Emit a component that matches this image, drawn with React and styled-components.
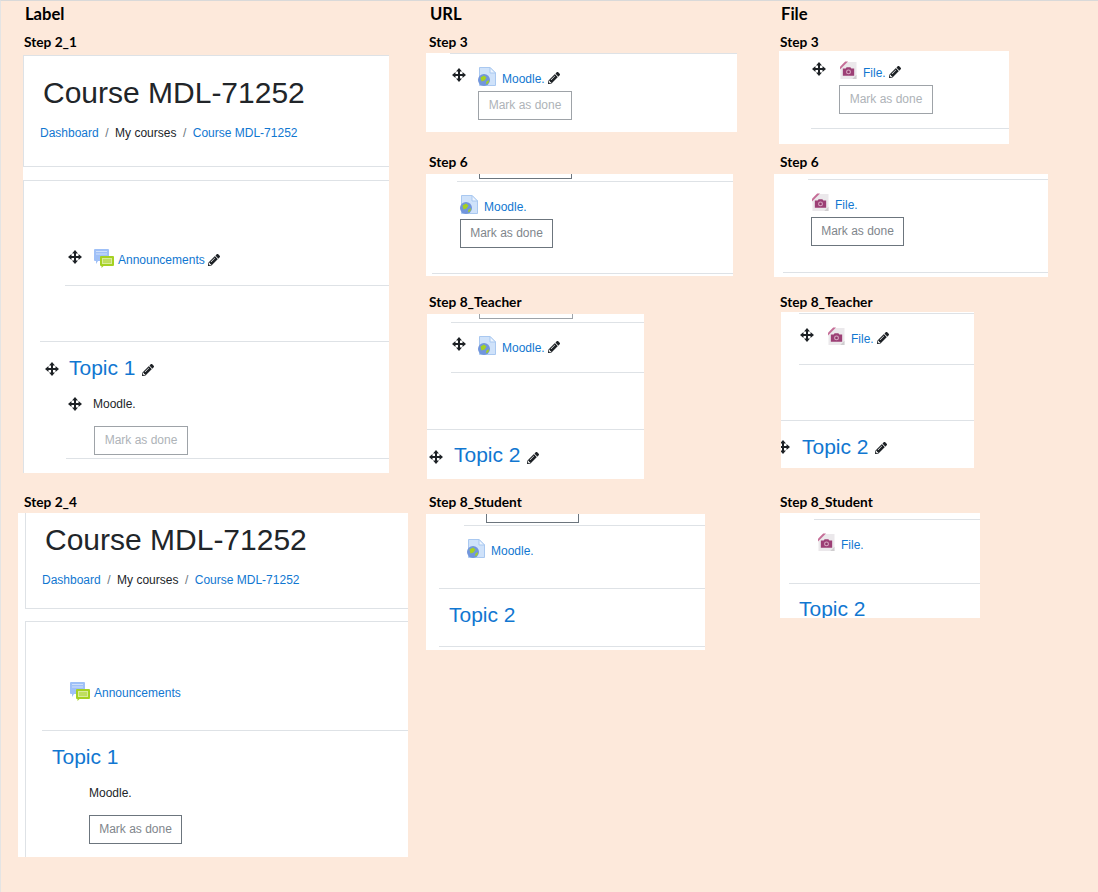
import React from "react";
import styled, { createGlobalStyle } from "styled-components";
import { FaPencilAlt } from "react-icons/fa";

const GlobalStyle = createGlobalStyle`
  html, body {
    margin: 0;
    padding: 0;
    background: #fde9db;
  }
`;

const Page = styled.div`
  box-sizing: border-box;
  width: 1098px;
  height: 892px;
  overflow: hidden;
  display: grid;
  grid-template-columns: 408px 348px 1fr;
  padding-left: 17px;
  background: #fde9db;
  border-top: 1px solid #d9d9d9;
  border-left: 1px solid #e4e4e4;
  font-family: "Liberation Sans", Arial, sans-serif;
`;

const Column = styled.div`
  display: flex;
  flex-direction: column;
`;

const Heading = styled.h2`
  margin: 0 0 7px ${(p) => p.$left}px;
  height: 26px;
  font: 700 16.6px/27px Lato, "Liberation Sans", sans-serif;
  color: #000;
`;

const Section = styled.section`
  height: ${(p) => p.$h}px;
  flex-shrink: 0;
`;

const StepLabel = styled.div`
  margin-left: ${(p) => p.$left}px;
  height: 16px;
  font: 700 13.7px/16px Lato, "Liberation Sans", sans-serif;
  color: #000;
`;

const Panel = styled.div`
  display: flex;
  flex-direction: column;
  margin: ${(p) => p.$top}px 0 0 ${(p) => p.$left}px;
  width: ${(p) => p.$w}px;
  height: ${(p) => p.$h}px;
  background: #fff;
  overflow: hidden;
`;

const Card = styled.div`
  box-sizing: border-box;
  display: flex;
  flex-direction: column;
  flex-shrink: 0;
  margin: ${(p) => p.$top || 0}px 0 0 ${(p) => p.$left || 0}px;
  height: ${(p) => p.$h}px;
  border-left: 1px solid #dee2e6;
  border-top: ${(p) => (p.$noTop ? "0" : "1px solid #dee2e6")};
  border-bottom: ${(p) => (p.$bottom ? "1px solid #dee2e6" : "0")};
`;

const Title = styled.h1`
  margin: ${(p) => p.$top}px 0 0 ${(p) => p.$left}px;
  font-size: 30px;
  font-weight: 400;
  line-height: 36px;
  color: #212529;
`;

const Breadcrumb = styled.nav`
  display: flex;
  gap: 6.5px;
  margin: ${(p) => p.$top}px 0 0 ${(p) => p.$left}px;
  font-size: 12px;
  line-height: 18px;
  color: #212529;
`;

const Crumb = styled.a`
  color: #1177d1;
`;

const Slash = styled.span`
  color: #6c757d;
`;

const Rule = styled.div`
  flex-shrink: 0;
  height: 1px;
  margin: ${(p) => p.$top}px 0 0 ${(p) => p.$left}px;
  background: #dee2e6;
`;

const Row = styled.div`
  display: flex;
  flex-shrink: 0;
  align-items: center;
  height: ${(p) => p.$h || 19}px;
  margin: ${(p) => p.$top}px 0 0 ${(p) => p.$left}px;
`;

const MoveSvg = styled.svg`
  flex-shrink: 0;
  width: 14px;
  height: 14px;
  margin-right: ${(p) => p.$gap ?? 12}px;
  margin-bottom: ${(p) => p.$lift || 0}px;
`;

const ItemLink = styled.a`
  margin-left: ${(p) => p.$gap ?? 6}px;
  padding-top: ${(p) => p.$drop ?? 5}px;
  font-size: 12px;
  color: #1177d1;
  white-space: nowrap;
`;

const PlainText = styled.span`
  font-size: 12px;
  color: #212529;
`;

const TopicLink = styled.a`
  font-size: 21px;
  line-height: 28px;
  color: #1177d1;
  white-space: nowrap;
`;

const Pencil = styled(FaPencilAlt)`
  flex-shrink: 0;
  width: 12px;
  height: 12px;
  margin-left: ${(p) => p.$gap ?? 3}px;
  margin-top: ${(p) => p.$drop ?? 3}px;
  color: #1d2125;
`;

const DoneButton = styled.button`
  box-sizing: border-box;
  flex-shrink: 0;
  align-self: flex-start;
  width: ${(p) => (p.$muted ? 94 : 93)}px;
  height: 29px;
  margin: ${(p) => p.$top}px 0 0 ${(p) => p.$left}px;
  padding: 0 0 2px;
  background: #fff;
  border: 1px solid ${(p) => (p.$muted ? "#9ea3a8" : "#6c757d")};
  font: 12px "Liberation Sans", Arial, sans-serif;
  color: ${(p) => (p.$muted ? "#aeb3b8" : "#7f868c")};
`;

const ClippedButton = styled.div`
  box-sizing: border-box;
  flex-shrink: 0;
  width: ${(p) => (p.$muted ? 94 : 93)}px;
  height: ${(p) => p.$h}px;
  margin-left: ${(p) => p.$left}px;
  border: 1px solid ${(p) => (p.$muted ? "#9ea3a8" : "#6c757d")};
  border-top: 0;
`;

const Move = ({ gap, lift }) => (
  <MoveSvg viewBox="0 0 14 14" $gap={gap} $lift={lift}>
    <path d="M6 2.500h2v9H6zM2.500 6h9v2h-9z" fill="#1d2125" />
    <path
      d="M7 0l3 3.500H4zM7 14l-3-3.500h6zM0 7l3.500-3v6zM14 7l-3.500 3V4z"
      fill="#1d2125"
    />
  </MoveSvg>
);

const IconBox = styled.svg`
  flex-shrink: 0;
  width: ${(p) => p.$w}px;
  height: 19px;
`;

const ForumIcon = () => (
  <IconBox viewBox="0 0 20 19" $w={20}>
    <path d="M1 0h13a1 1 0 0 1 1 1v10a1 1 0 0 1-1 1H4l-2 3v-3H1a1 1 0 0 1-1-1V1a1 1 0 0 1 1-1z" fill="#9fc0f7" />
    <path d="M2 2.500h11M2 5h11" stroke="#cfe0fb" strokeWidth="1" />
    <path d="M7 7h12a1 1 0 0 1 1 1v8a1 1 0 0 1-1 1H9.500l-2 2v-2H7a1 1 0 0 1-1-1V8a1 1 0 0 1 1-1z" fill="#a5d122" />
    <rect x="8" y="9" width="10" height="6" fill="#d9eb9c" />
    <path d="M9 11h8M9 13h8" stroke="#a5d122" strokeWidth="1" />
  </IconBox>
);

const UrlIcon = () => (
  <IconBox viewBox="0 0 18 19" $w={18}>
    <path d="M1.500 0.500h10.500l5.500 5.500v12.500H1.500z" fill="#cfe2fa" stroke="#a9c8f0" />
    <path d="M12 0.500v5.500h5.500z" fill="#eef5fe" stroke="#a9c8f0" />
    <circle cx="6" cy="13" r="6" fill="#7296dc" />
    <path d="M2.500 10.500l3.500-2 2.500 2-2 3-3 1zM8.500 14.500l2.500-1.500-.5 3-2.500 1.500z" fill="#a5d122" />
  </IconBox>
);

const FileIcon = () => (
  <IconBox viewBox="0 0 18 19" $w={17}>
    <path d="M0.500 6L6 0.500H17.500V18.500H0.500z" fill="#ebe8eb" />
    <path d="M13 18.500l4.500-4.500v4.500z" fill="#cfcdcf" />
    <path d="M0 5.500L5.500 0h3L0 8.500z" fill="#c56d97" />
    <path d="M3 7.500h3l1-1.500h4l1 1.500h3v7.500H3z" fill="#9c3f75" />
    <circle cx="9" cy="11" r="2.600" fill="#d9a9c4" />
    <circle cx="9" cy="11" r="1.400" fill="#8d3568" />
  </IconBox>
);

const CourseBreadcrumb = ({ top, left }) => (
  <Breadcrumb $top={top} $left={left}>
    <Crumb>Dashboard</Crumb>
    <Slash>/</Slash>
    <span>My courses</span>
    <Slash>/</Slash>
    <Crumb>Course MDL-71252</Crumb>
  </Breadcrumb>
);

const App = () => {
  return (
    <Page>
      <GlobalStyle />

      <Column>
        <Heading $left={7}>Label</Heading>
        <Section $h={460}>
          <StepLabel $left={6}>Step 2_1</StepLabel>
          <Panel $top={5} $left={5} $w={366} $h={418}>
            <Card $h={112} $bottom>
              <Title $top={19} $left={19}>Course MDL-71252</Title>
              <CourseBreadcrumb top={13} left={16} />
            </Card>
            <Card $top={13} $h={293}>
              <Row $top={67} $left={44} $h={20}>
                <Move gap={12} lift={3} />
                <ForumIcon />
                <ItemLink $gap={4} $drop={3}>Announcements</ItemLink>
                <Pencil />
              </Row>
              <Rule $top={17} $left={41} />
              <Rule $top={55} $left={16} />
              <Row $top={12} $left={21} $h={28}>
                <Move gap={10} lift={-2} />
                <TopicLink>Topic 1</TopicLink>
                <Pencil $gap={6} $drop={4} />
              </Row>
              <Row $top={13} $left={44} $h={18}>
                <Move gap={11} />
                <PlainText>Moodle.</PlainText>
              </Row>
              <DoneButton $muted $top={13} $left={70}>Mark as done</DoneButton>
              <Rule $top={3} $left={42} />
            </Card>
          </Panel>
        </Section>
        <Section $h={380}>
          <StepLabel $left={6}>Step 2_4</StepLabel>
          <Panel $top={3} $left={0} $w={390} $h={344}>
            <Card $noTop $left={7} $h={96} $bottom>
              <Title $top={9} $left={19}>Course MDL-71252</Title>
              <CourseBreadcrumb top={13} left={16} />
            </Card>
            <Card $left={7} $top={12} $h={236}>
              <Row $top={59} $left={44} $h={20}>
                <ForumIcon />
                <ItemLink $gap={4} $drop={3}>Announcements</ItemLink>
              </Row>
              <Rule $top={29} $left={16} />
              <Row $top={12} $left={26} $h={28}>
                <TopicLink>Topic 1</TopicLink>
              </Row>
              <Row $top={13} $left={63} $h={18}>
                <PlainText>Moodle.</PlainText>
              </Row>
              <DoneButton $top={13} $left={63}>Mark as done</DoneButton>
            </Card>
          </Panel>
        </Section>
      </Column>

      <Column>
        <Heading $left={4}>URL</Heading>
        <Section $h={120}>
          <StepLabel $left={3}>Step 3</StepLabel>
          <Panel $top={3} $left={0} $w={311} $h={79}>
            <Rule $top={0} $left={24} />
            <Row $top={13} $left={26}>
              <Move lift={3} />
              <UrlIcon />
              <ItemLink>Moodle.</ItemLink>
              <Pencil />
            </Row>
            <DoneButton $muted $top={5} $left={52}>Mark as done</DoneButton>
          </Panel>
        </Section>
        <Section $h={140}>
          <StepLabel $left={3}>Step 6</StepLabel>
          <Panel $top={4} $left={0} $w={307} $h={102}>
            <ClippedButton $h={5} $left={53} />
            <Rule $top={2} $left={31} />
            <Row $top={13} $left={34}>
              <UrlIcon />
              <ItemLink>Moodle.</ItemLink>
            </Row>
            <DoneButton $top={5} $left={34}>Mark as done</DoneButton>
            <Rule $top={25} $left={6} />
          </Panel>
        </Section>
        <Section $h={200}>
          <StepLabel $left={3}>Step 8_Teacher</StepLabel>
          <Panel $top={4} $left={1} $w={217} $h={165}>
            <ClippedButton $muted $h={5} $left={52} />
            <Rule $top={3} $left={24} />
            <Row $top={13} $left={25}>
              <Move lift={3} />
              <UrlIcon />
              <ItemLink>Moodle.</ItemLink>
              <Pencil />
            </Row>
            <Rule $top={17} $left={24} />
            <Rule $top={56} $left={0} />
            <Row $top={11} $left={2} $h={28}>
              <Move gap={11} lift={-4} />
              <TopicLink>Topic 2</TopicLink>
              <Pencil $gap={6} $drop={5} />
            </Row>
          </Panel>
        </Section>
        <Section $h={200}>
          <StepLabel $left={3}>Step 8_Student</StepLabel>
          <Panel $top={4} $left={0} $w={279} $h={136}>
            <ClippedButton $h={9} $left={60} />
            <Rule $top={2} $left={38} />
            <Row $top={13} $left={41}>
              <UrlIcon />
              <ItemLink>Moodle.</ItemLink>
            </Row>
            <Rule $top={30} $left={13} />
            <Row $top={12} $left={23} $h={28}>
              <TopicLink>Topic 2</TopicLink>
            </Row>
            <Rule $top={17} $left={13} />
          </Panel>
        </Section>
      </Column>

      <Column>
        <Heading $left={7}>File</Heading>
        <Section $h={120}>
          <StepLabel $left={6}>Step 3</StepLabel>
          <Panel $top={1} $left={5} $w={230} $h={93}>
            <Row $top={10} $left={33}>
              <Move gap={14} lift={3} />
              <FileIcon />
              <ItemLink>File.</ItemLink>
              <Pencil />
            </Row>
            <DoneButton $muted $top={5} $left={60}>Mark as done</DoneButton>
            <Rule $top={14} $left={32} />
          </Panel>
        </Section>
        <Section $h={140}>
          <StepLabel $left={6}>Step 6</StepLabel>
          <Panel $top={4} $left={0} $w={274} $h={103}>
            <Rule $top={5} $left={34} />
            <Row $top={13} $left={38}>
              <FileIcon />
              <ItemLink>File.</ItemLink>
            </Row>
            <DoneButton $top={5} $left={37}>Mark as done</DoneButton>
            <Rule $top={26} $left={9} />
          </Panel>
        </Section>
        <Section $h={200}>
          <StepLabel $left={6}>Step 8_Teacher</StepLabel>
          <Panel $top={2} $left={7} $w={193} $h={156}>
            <Rule $top={1} $left={18} />
            <Row $top={13} $left={19}>
              <Move gap={14} lift={3} />
              <FileIcon />
              <ItemLink>File.</ItemLink>
              <Pencil />
            </Row>
            <Rule $top={18} $left={18} />
            <Rule $top={55} $left={0} />
            <Row $top={12} $left={-5} $h={28}>
              <Move gap={12} />
              <TopicLink>Topic 2</TopicLink>
              <Pencil $gap={6} $drop={2} />
            </Row>
          </Panel>
        </Section>
        <Section $h={200}>
          <StepLabel $left={6}>Step 8_Student</StepLabel>
          <Panel $top={3} $left={6} $w={200} $h={105}>
            <Rule $top={6} $left={34} />
            <Row $top={13} $left={38}>
              <FileIcon />
              <ItemLink>File.</ItemLink>
            </Row>
            <Rule $top={31} $left={9} />
            <Row $top={11} $left={19} $h={28}>
              <TopicLink>Topic 2</TopicLink>
            </Row>
          </Panel>
        </Section>
      </Column>
    </Page>
  );
};

export default App;
